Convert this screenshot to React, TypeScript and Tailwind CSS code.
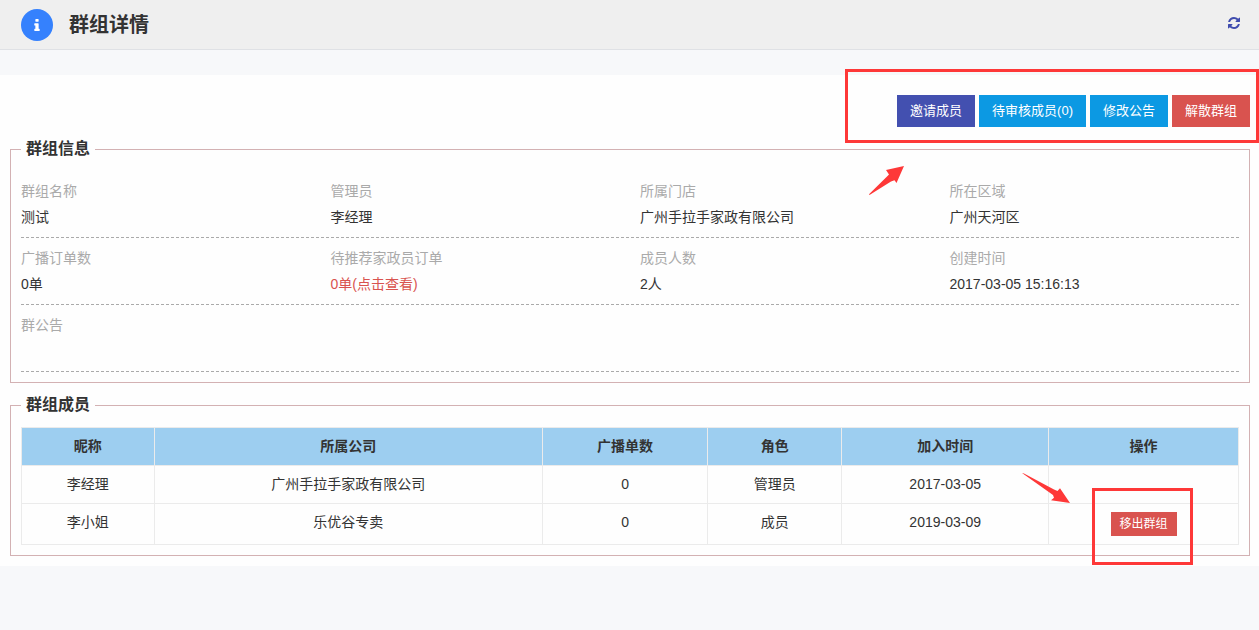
import type { ReactNode } from 'react';

interface Field {
  label: string;
  value: string;
  href?: string;
}

interface Member {
  name: string;
  company: string;
  orders: number;
  role: string;
  joined: string;
  removable: boolean;
}

const actions = [
  { label: '邀请成员', className: 'bg-[#4350b0]' },
  { label: '待审核成员(0)', className: 'bg-[#0c99e3]' },
  { label: '修改公告', className: 'bg-[#0c99e3]' },
  { label: '解散群组', className: 'bg-[#d9534f]' },
];

const rows: Field[][] = [
  [
    { label: '群组名称', value: '测试' },
    { label: '管理员', value: '李经理' },
    { label: '所属门店', value: '广州手拉手家政有限公司' },
    { label: '所在区域', value: '广州天河区' },
  ],
  [
    { label: '广播订单数', value: '0单' },
    { label: '待推荐家政员订单', value: '0单(点击查看)', href: '#orders' },
    { label: '成员人数', value: '2人' },
    { label: '创建时间', value: '2017-03-05 15:16:13' },
  ],
  [{ label: '群公告', value: '' }],
];

const columns = [
  { title: '昵称', width: 'w-[10.9%]' },
  { title: '所属公司', width: 'w-[31.9%]' },
  { title: '广播单数', width: 'w-[13.6%]' },
  { title: '角色', width: 'w-[11%]' },
  { title: '加入时间', width: 'w-[17%]' },
  { title: '操作', width: '' },
];

const members: Member[] = [
  { name: '李经理', company: '广州手拉手家政有限公司', orders: 0, role: '管理员', joined: '2017-03-05', removable: false },
  { name: '李小姐', company: '乐优谷专卖', orders: 0, role: '成员', joined: '2019-03-09', removable: true },
];

function InfoIcon() {
  return (
    <svg viewBox="576 128 640 1408" className="h-3 w-1.5" fill="currentColor" aria-hidden="true">
      <path d="M1216 1344v128q0 26-19 45t-45 19h-512q-26 0-45-19t-19-45v-128q0-26 19-45t45-19h64v-384h-64q-26 0-45-19t-19-45v-128q0-26 19-45t45-19h384q26 0 45 19t19 45v576h64q26 0 45 19t19 45zm-128-1152v192q0 26-19 45t-45 19h-256q-26 0-45-19t-19-45v-192q0-26 19-45t45-19h256q26 0 45 19t19 45z" />
    </svg>
  );
}

function RefreshIcon() {
  return (
    <svg viewBox="0 0 1536 1536" className="h-3 w-3" fill="currentColor" aria-hidden="true">
      <path d="M1511 928q0 5-1 7-64 268-268 434.5t-478 166.5q-146 0-282.5-55t-243.5-157l-129 129q-19 19-45 19t-45-19-19-45v-448q0-26 19-45t45-19h448q26 0 45 19t19 45-19 45l-137 137q71 66 161 102t187 36q134 0 250-65t186-179q11-17 53-117 8-23 30-23h192q13 0 22.5 9.5t9.5 22.5zm25-800v448q0 26-19 45t-45 19h-448q-26 0-45-19t-19-45 19-45l138-138q-148-137-349-137-134 0-250 65t-186 179q-11 17-53 117-8 23-30 23h-199q-13 0-22.5-9.5t-9.5-22.5v-7q65-268 270-434.5t480-166.5q146 0 284 55.5t245 156.5l130-129q19-19 45-19t45 19 19 45z" />
    </svg>
  );
}

function Panel({ title, children }: { title: string; children: ReactNode }) {
  return (
    <fieldset className="mt-2.5 min-w-0 border border-[#d3b1b3] p-2.5">
      <legend className="px-[5px] text-base leading-6 font-bold">{title}</legend>
      {children}
    </fieldset>
  );
}

export default function App() {
  return (
    <div className="min-h-screen bg-[#f7f8fa] font-['Liberation_Sans','Noto_Sans_CJK_SC',sans-serif] text-sm text-[#333]">
      {/* Header */}
      <header className="flex h-[50px] items-center border-b border-[#dfe1e5] bg-[#efefef] pr-[19px] pl-[21px]">
        <span className="flex h-8 w-8 items-center justify-center rounded-full bg-[#3581fd] text-white">
          <InfoIcon />
        </span>
        <h1 className="ml-4 text-xl font-bold">群组详情</h1>
        <button type="button" aria-label="刷新" className="ml-auto pb-1 text-[#3f4cae]">
          <RefreshIcon />
        </button>
      </header>

      <main className="mt-[25px] overflow-x-clip bg-[#fefefe] pt-5 pr-[9px] pb-2.5 pl-2.5">
        {/* Toolbar */}
        <div className="flex justify-end">
          <div className="relative flex gap-1">
            {actions.map((action) => (
              <button
                key={action.label}
                type="button"
                className={`h-8 px-[13px] text-[13px] leading-5 text-white ${action.className}`}
              >
                {action.label}
              </button>
            ))}
            {/* Highlight */}
            <div className="pointer-events-none absolute -top-[26px] -right-[9px] -bottom-4 -left-13 border-3 border-[#fe3838]">
              <svg viewBox="0 0 36 30" className="absolute top-[94px] left-5 h-[30px] w-9" fill="#fe3838" aria-hidden="true">
                <path d="M36 0 28.5 17 26.5 14.2 23 15.5 1.5 29 1 28.2 18 11.5 21 8.5 18 4Z" />
              </svg>
            </div>
          </div>
        </div>

        <Panel title="群组信息">
          {rows.map((fields) => (
            <dl key={fields[0].label} className="grid grid-cols-4 gap-x-5 border-b border-dashed border-[#aaa] py-[7px] leading-[26px]">
              {fields.map((field) => (
                <div key={field.label}>
                  <dt className="text-[#aaa]">{field.label}</dt>
                  <dd className="min-h-[26px]">
                    {field.href ? (
                      <a href={field.href} className="text-[#d9534f]">
                        {field.value}
                      </a>
                    ) : (
                      field.value
                    )}
                  </dd>
                </div>
              ))}
            </dl>
          ))}
        </Panel>

        <Panel title="群组成员">
          <table className="w-full table-fixed border-collapse text-center leading-[21px] [&_td]:border [&_td]:border-[#ebebeb] [&_td]:p-2 [&_td]:align-top [&_th]:border [&_th]:border-[#ebebeb] [&_th]:p-2">
            <thead className="bg-[#9dcef0]">
              <tr>
                {columns.map((col) => (
                  <th key={col.title} className={col.width}>
                    {col.title}
                  </th>
                ))}
              </tr>
            </thead>
            <tbody>
              {members.map((member) => (
                <tr key={member.name}>
                  <td>{member.name}</td>
                  <td>{member.company}</td>
                  <td>{member.orders}</td>
                  <td>{member.role}</td>
                  <td>{member.joined}</td>
                  <td>
                    {member.removable && (
                      <div className="relative mx-auto w-fit">
                        <button type="button" className="block h-6 bg-[#d9534f] px-[9px] text-xs text-white">
                          移出群组
                        </button>
                        {/* Highlight */}
                        <div className="pointer-events-none absolute -top-6 -right-4 -bottom-[29px] -left-[19px] border-3 border-[#fe3838]">
                          <svg viewBox="0 0 48 30" className="absolute -top-[18px] -left-[73px] h-[30px] w-12" fill="#fe3838" aria-hidden="true">
                            <path d="M0 0 2 .5 32 16.5 35.5 18 38 15.3 48 30 29 27.3 32 24.7 31 22Z" />
                          </svg>
                        </div>
                      </div>
                    )}
                  </td>
                </tr>
              ))}
            </tbody>
          </table>
        </Panel>
      </main>
    </div>
  );
}
